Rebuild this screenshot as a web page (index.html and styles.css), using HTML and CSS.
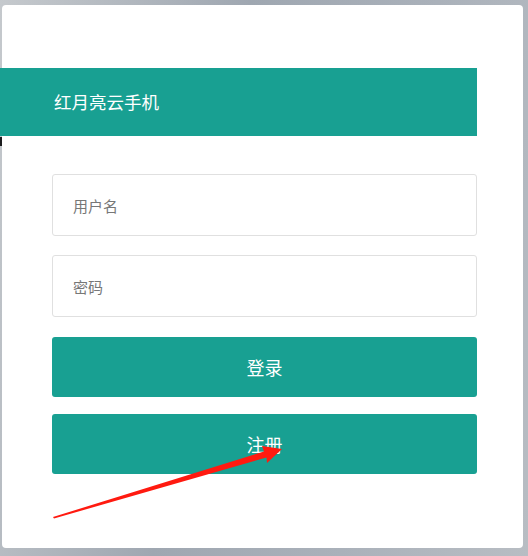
FILE: index.html
```html
<!DOCTYPE html>
<html lang="zh-CN">
<head>
<meta charset="utf-8">
<title>红月亮云手机</title>
<link rel="stylesheet" href="styles.css">
</head>
<body>
<div class="page">
  <div class="card">
    <div class="header">红月亮云手机</div>
    <form class="form">
      <input class="field" type="text" placeholder="用户名">
      <input class="field field-pass" type="password" placeholder="密码">
      <button class="btn btn-login" type="button">登录</button>
      <button class="btn btn-reg" type="button">注册</button>
    </form>
  </div>
  <svg class="arrow" width="528" height="556" viewBox="0 0 528 556">
    <polygon points="53,517 264,451.5 262,446 282,449 267,463 266.5,457.5 54,518.5" fill="#ff1a10"/>
  </svg>
</div>
</body>
</html>
```
FILE: styles.css
```css
html, body {
  margin: 0;
  padding: 0;
}
body {
  font-family: "Noto Sans CJK SC", "Noto Sans", sans-serif;
}
.page {
  position: relative;
  width: 528px;
  height: 556px;
  box-sizing: border-box;
  padding: 5px 5px 8px 2px;
  background:
    linear-gradient(to bottom, transparent 137px, #1c1c1e 137px, #1c1c1e 146px, transparent 146px) 0 0 / 2px 100% no-repeat,
    linear-gradient(100deg, #c5c9cd 0%, #9fa7b1 40%, #aab1ba 70%, #b8bdc3 100%);
  overflow: hidden;
}
.card {
  width: 521px;
  height: 543px;
  background: #fff;
  border-radius: 4px;
  padding-top: 63px;
  box-sizing: border-box;
}
.header {
  margin-left: -2px;
  width: 477px;
  height: 68px;
  box-sizing: border-box;
  padding-left: 54px;
  background: #18a092;
  color: #fff;
  font-size: 17.5px;
  line-height: 68px;
}
.form {
  margin: 38px 0 0 50px;
  width: 425px;
  display: flex;
  flex-direction: column;
}
.field {
  height: 62px;
  box-sizing: border-box;
  border: 1px solid #e0e0e0;
  border-radius: 3px;
  padding: 0 20px;
  font-family: inherit;
  font-size: 15px;
  color: #333;
  outline: none;
  margin: 0 0 19px 0;
}
.field-pass {
  margin-bottom: 20px;
}
.field::placeholder {
  color: #777;
}
.btn {
  height: 60px;
  border: none;
  border-radius: 3px;
  background: #18a092;
  color: #fff;
  font-family: inherit;
  font-size: 18px;
  padding: 0;
  margin: 0;
}
.btn-login {
  margin-bottom: 17px;
}
.arrow {
  position: absolute;
  left: 0;
  top: 0;
  pointer-events: none;
}
```
